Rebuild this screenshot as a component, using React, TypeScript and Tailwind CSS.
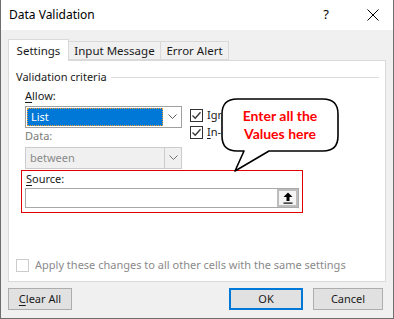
import React from "react";

function Chevron({ color = "#606060" }: { color?: string }) {
  return (
    <svg width="9" height="6" viewBox="0 0 9 6" fill="none" stroke={color} strokeWidth="1">
      <path d="M0.5 0.5 L4.5 4.5 L8.5 0.5" />
    </svg>
  );
}

function Check() {
  return (
    <svg width="11" height="11" viewBox="0 0 11 11" fill="none" stroke="#333" strokeWidth="1.3">
      <path d="M1.5 5.5 L4.2 8.2 L9.5 2.2" />
    </svg>
  );
}

export default function App() {
  return (
    <div
      className="w-[394px] h-[319px] bg-[#f0f0f0] border-x border-b border-[#6e6e6e] text-[11px] text-[#1a1a1a] overflow-hidden"
      style={{ fontFamily: '"Noto Sans", "Open Sans", sans-serif' }}
    >
      {/* title bar */}
      <div className="h-[30px] bg-white flex items-center pl-[8px] pr-[14px]">
        <span className="text-[12px] text-black">Data Validation</span>
        <span className="ml-auto text-[13px] text-black mr-[38px]">?</span>
        <svg width="12" height="12" viewBox="0 0 12 12" stroke="#000" strokeWidth="1">
          <path d="M0.5 0.5 L11.5 11.5 M11.5 0.5 L0.5 11.5" />
        </svg>
      </div>

      {/* tabs */}
      <div className="flex items-end pl-[7px] pt-[8px] h-[30px] leading-none">
        <div className="w-[61px] h-[22px] bg-white border border-b-0 border-[#d9d9d9] flex items-center justify-center relative z-10 -mb-px text-[11.5px]">
          Settings
        </div>
        <div className="w-[92px] h-[19px] border border-l-0 border-[#d9d9d9] flex items-center justify-center text-[11.5px]">
          Input Message
        </div>
        <div className="w-[68px] h-[19px] border border-l-0 border-[#d9d9d9] flex items-center justify-center text-[11.5px]">
          Error Alert
        </div>
      </div>

      {/* panel */}
      <div className="relative ml-[7px] w-[378px] h-[222px] bg-white border border-[#d9d9d9]">
        <div className="flex items-center mt-[8px] ml-[7px] mr-[6px] h-[16px]">
          <span>Validation criteria</span>
          <div className="flex-1 h-px bg-[#dcdcdc] ml-[4px]" />
        </div>

        <div className="flex ml-[16px] mt-[3px]">
          <div className="w-[157px]">
            <div className="h-[16px] flex items-center">
              <span><span className="underline underline-offset-2">A</span>llow:</span>
            </div>
            <div className="mt-[2px] h-[22px] border border-[#a0a0a0] flex bg-white">
              <div className="flex-1 m-[1px] bg-[#0078d7] border border-dotted border-[#f0a030] text-white flex items-center pl-[3px]">
                List
              </div>
              <div className="w-[17px] flex items-center justify-center">
                <Chevron />
              </div>
            </div>
            <div className="h-[16px] flex items-center text-[#7a7a7a]">Data:</div>
            <div className="mt-[3px] h-[22px] border border-[#cccccc] flex bg-[#f0f0f0] text-[#8a8a8a]">
              <div className="flex-1 flex items-center pl-[4px]">between</div>
              <div className="w-[17px] flex items-center justify-center border-l border-[#cccccc]">
                <Chevron color="#707070" />
              </div>
            </div>
          </div>
          <div className="ml-[8px] mt-[20px]">
            <div className="flex items-center h-[14px]">
              <div className="w-[13px] h-[13px] border border-[#333] flex items-center justify-center">
                <Check />
              </div>
              <span className="ml-[4px] w-[14px] overflow-hidden whitespace-nowrap">Ignore blank</span>
            </div>
            <div className="flex items-center h-[14px] mt-[3px]">
              <div className="w-[13px] h-[13px] border border-[#333] flex items-center justify-center">
                <Check />
              </div>
              <span className="ml-[4px] w-[14px] overflow-hidden whitespace-nowrap">
                <span className="underline underline-offset-2">I</span>n-cell dropdown
              </span>
            </div>
          </div>
        </div>

        {/* source box */}
        <div className="ml-[12px] mt-[1px] w-[282px] h-[43px] border border-[#e00000] pl-[3px] pr-[3px]">
          <div className="h-[16px] flex items-center pl-[1px]">
            <span><span className="underline underline-offset-2">S</span>ource:</span>
          </div>
          <div className="mt-[1px] h-[20px] border border-[#a8a8a8] flex">
            <div className="flex-1" />
            <div className="w-[21px] h-full border-2 border-[#bdbdbd] bg-[#f4f4f4] flex items-center justify-center">
              <svg width="10" height="12" viewBox="0 0 10 12">
                <path d="M5 0.5 L9.5 5 L6.5 5 L6.5 9 L3.5 9 L3.5 5 L0.5 5 Z" fill="#000" />
                <rect x="0.5" y="10.5" width="9" height="1.2" fill="#000" />
              </svg>
            </div>
          </div>
        </div>

        <div className="flex items-center ml-[7px] mt-[44px] text-[#8a8a8a]">
          <div className="w-[13px] h-[13px] border border-[#cccccc]" />
          <span className="ml-[6px]">Apply these changes to all other cells with the same settings</span>
        </div>

        {/* callout */}
        <div className="absolute left-[210px] top-[36px] w-[124px] h-[76px]">
          <svg width="124" height="76" viewBox="0 0 124 76" className="absolute inset-0">
            <path
              d="M18 2 H104 Q119 2 119 17 V39 Q119 54 104 54 H50 L16 74 L25 54 H18 Q3 54 3 39 V17 Q3 2 18 2 Z"
              fill="#fff"
              stroke="#000"
              strokeWidth="1.6"
              strokeLinejoin="round"
            />
          </svg>
          <div
            className="absolute left-[14px] top-[10px] w-[94px] text-center text-[#ff0000] font-bold text-[14px] leading-[18px]"
            style={{ fontFamily: "Lato, sans-serif" }}
          >
            Enter all the
            <br />
            Values here
          </div>
        </div>
      </div>

      {/* buttons */}
      <div className="flex mt-[6px] pl-[7px] h-[22px]">
        <div className="w-[64px] h-[22px] bg-[#e1e1e1] border border-[#adadad] flex items-center justify-center">
          <span><span className="underline underline-offset-2">C</span>lear All</span>
        </div>
        <div className="ml-auto w-[74px] h-[22px] bg-[#e1e1e1] border-2 border-[#0078d7] flex items-center justify-center">
          OK
        </div>
        <div className="ml-[10px] mr-[10px] w-[70px] h-[22px] bg-[#e1e1e1] border border-[#adadad] flex items-center justify-center">
          Cancel
        </div>
      </div>
    </div>
  );
}
